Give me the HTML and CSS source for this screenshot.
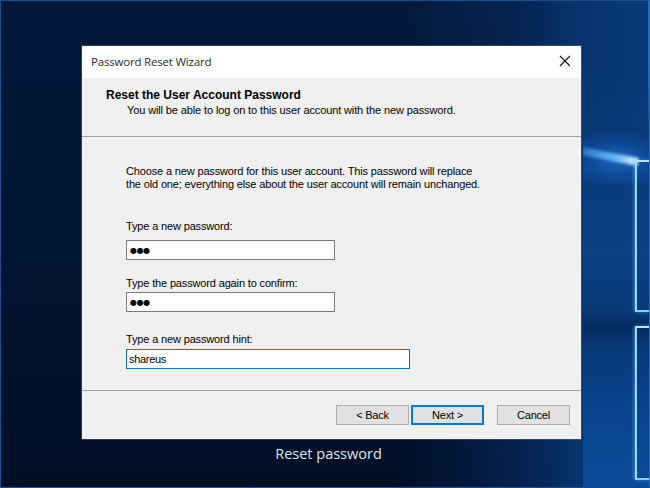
FILE: index.html
```html
<!DOCTYPE html>
<html>
<head>
<meta charset="utf-8">
<link rel="stylesheet" href="styles.css">
</head>
<body>
<div class="desktop">
  <div class="beams" aria-hidden="true">
    <div class="glow"></div>
    <div class="ray"></div>
    <div class="pane pane-top"></div>
    <div class="pane pane-bottom"></div>
  </div>
  <div class="dialog">
    <div class="titlebar">
      <span class="title">Password Reset Wizard</span>
      <svg class="close" width="12" height="12" viewBox="0 0 12 12"><path d="M1 1 L11 11 M11 1 L1 11" stroke="#111" stroke-width="1.1" fill="none"/></svg>
    </div>
    <div class="header">
      <div class="h-title">Reset the User Account Password</div>
      <div class="h-sub">You will be able to log on to this user account with the new password.</div>
    </div>
    <div class="content">
      <p class="intro">Choose a new password for this user account. This password will replace<br>the old one; everything else about the user account will remain unchanged.</p>
      <label class="lbl l1">Type a new password:</label>
      <div class="field short f1"><span class="dots">●●●</span></div>
      <label class="lbl l2">Type the password again to confirm:</label>
      <div class="field short f2"><span class="dots">●●●</span></div>
      <label class="lbl l3">Type a new password hint:</label>
      <div class="field long focus f3"><span class="val">shareus</span></div>
    </div>
    <div class="footer">
      <button class="btn">&lt; Back</button>
      <button class="btn primary">Next &gt;</button>
      <button class="btn cancel">Cancel</button>
    </div>
  </div>
  <div class="caption">Reset password</div>
</div>
</body>
</html>
```

FILE: styles.css
```css
html, body {
  margin: 0;
  padding: 0;
}
body {
  width: 650px;
  height: 488px;
  overflow: hidden;
  background: #021128;
}
.desktop {
  position: relative;
  width: 650px;
  height: 488px;
  border: 1px solid #1d4f8f;
  border-right-width: 2px;
  border-right-color: #2a6cb8;
  background:
    linear-gradient(90deg, rgba(2,14,36,0) 0%, rgba(2,14,36,0) 62%, rgba(6,40,92,0.7) 80%, rgba(8,52,110,1) 90%, rgba(10,58,118,1) 100%),
    linear-gradient(180deg, #03193a 0%, #021634 40%, #010f26 100%);
  padding: 45px 0 0 81px;
  box-sizing: border-box;
  display: flex;
  flex-direction: column;
  font-family: "Liberation Sans", Arial, sans-serif;
}
.beams {
  position: absolute;
  left: 582px;
  top: 60px;
  width: 66px;
  height: 427px;
  background: linear-gradient(180deg, rgba(10,56,116,0) 0%, #0a3a78 20%, #0b4084 45%, #0a3a78 58%, #052c60 62%, #083a7a 68%, #0b4590 85%, #0c4a98 100%);
  overflow: hidden;
}
.glow {
  position: absolute;
  left: -20px;
  top: 68px;
  width: 110px;
  height: 56px;
  background: radial-gradient(ellipse at 50% 55%, rgba(40,140,240,0.55) 0%, rgba(20,100,210,0.3) 40%, rgba(20,90,190,0) 70%);
}
.ray {
  position: absolute;
  left: -2px;
  top: 97px;
  width: 57px;
  height: 8px;
  background: linear-gradient(90deg, rgba(60,160,250,0.5) 0%, rgba(120,205,255,0.85) 65%, #e6f6ff 100%);
  filter: blur(1.5px);
  transform: rotate(11deg);
  transform-origin: 100% 50%;
}
.pane {
  position: absolute;
  left: 52px;
  width: 16px;
  border-left: 2px solid #9bd8ff;
  border-top: 2px solid #b8e4ff;
  border-bottom: 2px solid #8acdff;
  box-shadow: -1px 0 3px rgba(80,170,255,0.7);
}
.pane-top {
  top: 99px;
  height: 148px;
}
.pane-bottom {
  top: 265px;
  height: 150px;
}
.dialog {
  position: relative;
  width: 499px;
  height: 393px;
  background: #f0f0f0;
  display: flex;
  flex-direction: column;
  box-shadow: 0 0 0 1px rgba(120,120,120,0.4);
}
.titlebar {
  height: 32px;
  flex: none;
  background: #ffffff;
  display: flex;
  align-items: center;
  justify-content: space-between;
  padding: 0 10px 0 9px;
}
.title {
  font-family: "Open Sans", "Noto Sans", sans-serif;
  font-size: 11.5px;
  color: #2b2b2b;
  letter-spacing: -0.2px;
  margin-top: -1px;
}
.close {
  margin-top: -2px;
}
.header {
  height: 59px;
  flex: none;
  box-sizing: border-box;
  border-bottom: 1px solid #a0a0a0;
  padding: 10px 0 0 24px;
  font-size: 11px;
  color: #000;
}
.h-title {
  font-weight: bold;
  font-size: 12px;
  line-height: 14px;
  letter-spacing: 0px;
}
.h-sub {
  line-height: 13px;
  margin-top: 2px;
  padding-left: 21px;
  letter-spacing: -0.12px;
}
.content {
  height: 254px;
  flex: none;
  border-bottom: 1px solid #a0a0a0;
  padding: 28px 0 0 44px;
  box-sizing: border-box;
  display: flex;
  flex-direction: column;
  align-items: flex-start;
  font-size: 11px;
  color: #000;
}
.intro {
  margin: 0;
  line-height: 13px;
  letter-spacing: -0.15px;
}
.lbl {
  display: block;
  line-height: 13px;
  letter-spacing: -0.15px;
}
.l1 { margin-top: 29px; }
.l2 { margin-top: 17px; }
.l3 { margin-top: 21px; }
.field {
  box-sizing: border-box;
  height: 20px;
  background: #fff;
  border: 1px solid #7a7a7a;
  display: flex;
  align-items: center;
  padding-left: 3px;
}
.f1 { margin-top: 7px; }
.f2 { margin-top: 2px; }
.f3 { margin-top: 3px; }
.field.short { width: 209px; }
.field.long { width: 284px; padding-left: 2px; }
.field.focus { border-color: #0078d7; }
.dots {
  font-family: "DejaVu Sans", sans-serif;
  font-size: 8px;
  letter-spacing: -0.3px;
  color: #000;
}
.val {
  font-size: 11px;
  letter-spacing: -0.3px;
  color: #000;
}
.footer {
  flex: 1;
  display: flex;
  align-items: flex-start;
  padding: 14px 0 0 254px;
}
.btn {
  width: 73px;
  height: 20px;
  box-sizing: border-box;
  border: 1px solid #adadad;
  background: #e1e1e1;
  font-family: "Liberation Sans", Arial, sans-serif;
  font-size: 11px;
  color: #000;
  padding: 0;
  letter-spacing: -0.2px;
}
.btn.primary {
  margin-left: 2px;
  border: 2px solid #0078d7;
}
.btn.cancel {
  margin-left: 13px;
}
.caption {
  width: 499px;
  text-align: center;
  margin-top: 5px;
  font-family: "Open Sans", "Noto Sans", sans-serif;
  font-size: 14.5px;
  color: #dfe6ee;
  padding-right: 6px;
  box-sizing: border-box;
}
```
